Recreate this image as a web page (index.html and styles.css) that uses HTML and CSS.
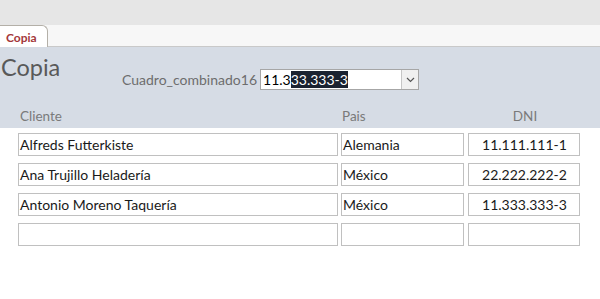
FILE: index.html
```html
<!DOCTYPE html>
<html lang="es">
<head>
  <meta charset="UTF-8" />
  <title>Copia</title>
  <link rel="stylesheet" href="styles.css">
</head>
<body>
  <div class="topbar"></div>

  <div class="tabstrip">
    <div class="tab">Copia</div>
  </div>

  <div class="form-header">
    <div class="title-row">
      <h1>Copia</h1>
      <label class="combo-label" for="combo">Cuadro_combinado16</label>
      <div class="combo" id="combo">
        <span class="combo-text">11.3<span class="sel">33.333-3</span></span>
        <span class="combo-btn">
          <svg width="9" height="6" viewBox="0 0 9 6"><path d="M1 1 L4.5 4.5 L8 1" fill="none" stroke="#555" stroke-width="1.2"/></svg>
        </span>
      </div>
    </div>
    <div class="cols">
      <div class="col-cliente">Cliente</div>
      <div class="col-pais">Pais</div>
      <div class="col-dni">DNI</div>
    </div>
  </div>

  <div class="detail">
    <div class="row">
      <div class="field">Alfreds Futterkiste</div>
      <div class="field">Alemania</div>
      <div class="field dni">11.111.111-1</div>
    </div>
    <div class="row">
      <div class="field">Ana Trujillo Heladería</div>
      <div class="field">México</div>
      <div class="field dni">22.222.222-2</div>
    </div>
    <div class="row">
      <div class="field">Antonio Moreno Taquería</div>
      <div class="field">México</div>
      <div class="field dni">11.333.333-3</div>
    </div>
    <div class="row">
      <div class="field"></div>
      <div class="field"></div>
      <div class="field dni"></div>
    </div>
  </div>
</body>
</html>
```

FILE: styles.css
```css
* {
  box-sizing: border-box;
}
body {
  margin: 0;
  font-family: 'Lato', 'Open Sans', sans-serif;
  background: #fff;
  color: #1a1a1a;
}
.topbar {
  height: 25px;
  background: #e6e6e6;
}
.tabstrip {
  height: 22px;
  background: #f7f7f7;
  border-bottom: 1px solid #c9c9c9;
  display: flex;
  align-items: flex-end;
}
.tab {
  height: 22px;
  width: 48px;
  padding: 4px 0 0 6px;
  background: #fff;
  border: 1px solid #b4b0a8;
  border-left: none;
  border-bottom: none;
  border-radius: 0 6px 0 0;
  color: #a4373a;
  font-weight: bold;
  font-size: 12px;
  margin-bottom: -1px;
}
.form-header {
  background: #d6dce5;
  height: 81px;
  display: flex;
  flex-direction: column;
}
.title-row {
  display: flex;
  align-items: flex-start;
  height: 61px;
}
h1 {
  margin: 6px 0 0 1px;
  font-size: 23.5px;
  font-weight: normal;
  color: #595959;
  width: 121px;
}
.combo-label {
  margin-top: 24px;
  font-size: 14px;
  color: #6d6d6d;
}
.combo {
  margin: 22px 0 0 3px;
  width: 159px;
  height: 21px;
  background: #fff;
  border: 1px solid #a6a6a6;
  display: flex;
  align-items: center;
  justify-content: space-between;
  font-size: 14px;
  color: #000;
}
.combo-text {
  padding-left: 2px;
}
.sel {
  background: #1b2230;
  color: #fff;
}
.combo-btn {
  width: 17px;
  height: 19px;
  background: #f0f0f0;
  border-left: 1px solid #c6c6c6;
  display: flex;
  align-items: center;
  justify-content: center;
}
.cols {
  display: grid;
  grid-template-columns: 322px 127px 113px;
  padding-left: 20px;
  font-size: 13.5px;
  color: #7a7a7a;
}
.col-dni {
  text-align: center;
  margin-left: -1px;
}
.detail {
  padding: 5px 0 0 18px;
}
.row {
  display: grid;
  grid-template-columns: 320px 123px 113px;
  column-gap: 3px;
  margin-bottom: 7px;
}
.row .field:last-child {
  margin-left: 1px;
}
.field {
  height: 23px;
  border: 1px solid #c0c0c0;
  background: #fff;
  font-size: 14px;
  padding: 2px 0 0 1px;
  white-space: nowrap;
  overflow: hidden;
}
.field.dni {
  text-align: center;
}
```
